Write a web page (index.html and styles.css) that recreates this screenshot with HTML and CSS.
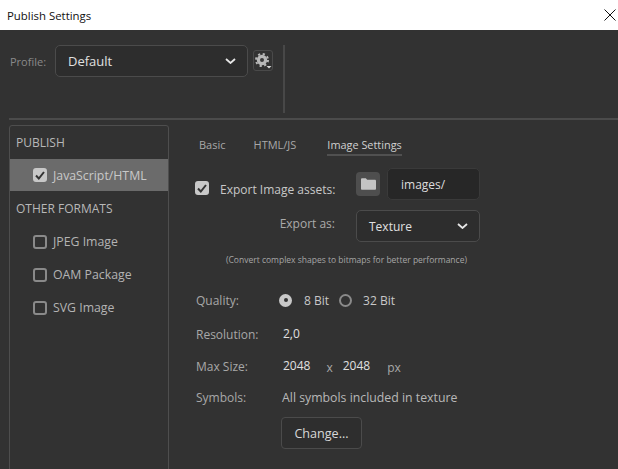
FILE: index.html
```html
<!DOCTYPE html>
<html lang="en">
<head>
<meta charset="utf-8">
<title>Publish Settings</title>
<link rel="stylesheet" href="styles.css">
</head>
<body>
<div class="window">
  <header class="titlebar">
    <span class="title">Publish Settings</span>
    <svg class="close" width="12" height="12" viewBox="0 0 12 12"><path d="M.5.5l11 11M11.500.5l-11 11" stroke="#111" stroke-width="1" fill="none"/></svg>
  </header>
  <section class="profile">
    <span class="profile-label">Profile:</span>
    <div class="select profile-select"><span>Default</span>
      <svg class="chev" width="11" height="6" viewBox="0 0 11 6"><path d="M1 1l4.500 4 4.500-4" stroke="#e6e6e6" stroke-width="1.800" fill="none"/></svg>
    </div>
    <div class="gear-btn">
      <svg width="18" height="18" viewBox="0 0 18 18"><circle cx="8" cy="8" r="5.200" fill="#b8b8b8"/><circle cx="8" cy="8" r="6" fill="none" stroke="#b8b8b8" stroke-width="2" stroke-dasharray="2.200 2.512"/><circle cx="8" cy="8" r="2" fill="#3a3a3a"/><path d="M12.500 14h5L15 16.500z" fill="#d8d8d8"/></svg>
    </div>
    <div class="vsep"></div>
  </section>
  <div class="hsep"></div>
  <main class="body">
    <aside class="sidebar">
      <div class="group">PUBLISH</div>
      <div class="item active"><span class="check on"><svg width="10" height="9" viewBox="0 0 10 9"><path d="M1 4.500l2.800 3L9 1" stroke="#333" stroke-width="2" fill="none"/></svg></span>JavaScript/HTML</div>
      <div class="group other">OTHER FORMATS</div>
      <div class="item"><span class="check"></span>JPEG Image</div>
      <div class="item"><span class="check"></span>OAM Package</div>
      <div class="item"><span class="check"></span>SVG Image</div>
    </aside>
    <div class="pane">
      <nav class="tabs">
        <span class="tab">Basic</span>
        <span class="tab">HTML/JS</span>
        <span class="tab current">Image Settings</span>
      </nav>
      <div class="export-row">
        <span class="check on export-check"><svg width="10" height="9" viewBox="0 0 10 9"><path d="M1 4.500l2.800 3L9 1" stroke="#333" stroke-width="2" fill="none"/></svg></span>
        <span class="export-label">Export Image assets:</span>
        <span class="folder"><svg width="15" height="12" viewBox="0 0 15 12"><path d="M0 1.500C0 .7.500.2 1.200.2h3.600l1.400 1.500h7.600c.7 0 1.200.5 1.200 1.200v7.900c0 .7-.5 1-1.200 1H1.200C.5 11.800 0 11.500 0 10.800z" fill="#c4c4c4"/></svg></span>
        <span class="input">images/</span>
      </div>
      <div class="export-as">
        <span class="export-as-label">Export as:</span>
        <div class="select texture-select"><span>Texture</span>
          <svg class="chev" width="11" height="6" viewBox="0 0 11 6"><path d="M1 1l4.500 4 4.500-4" stroke="#e6e6e6" stroke-width="1.800" fill="none"/></svg>
        </div>
      </div>
      <p class="hint">(Convert complex shapes to bitmaps for better performance)</p>
      <div class="grid">
        <span class="lbl">Quality:</span>
        <div class="val radios">
          <span class="radio on"></span><span class="radio-text">8 Bit</span>
          <span class="radio"></span><span class="radio-text">32 Bit</span>
        </div>
        <span class="lbl">Resolution:</span>
        <div class="val bright res">2,0</div>
        <span class="lbl">Max Size:</span>
        <div class="val size"><span class="bright num">2048</span><span class="x">x</span><span class="bright num">2048</span><span class="px">px</span></div>
        <span class="lbl">Symbols:</span>
        <div class="val wide">All symbols included in texture</div>
      </div>
      <button class="change" type="button">Change...</button>
    </div>
  </main>
</div>
</body>
</html>
```
FILE: styles.css
```css
* { box-sizing: border-box; }
html, body { margin: 0; height: 100%; }
body { background: #323232; overflow: hidden; font-family: "Open Sans", "Noto Sans", sans-serif; font-size: 12px; color: #c2c2c2; }
.window { width: 618px; height: 469px; overflow: hidden; display: flex; flex-direction: column; }
.titlebar { height: 30px; flex: none; background: #fff; color: #111; display: flex; align-items: center; justify-content: space-between; padding: 0 2px 0 7px; }
.title { font-size: 11.400px; }
.profile { height: 88px; flex: none; display: flex; align-items: flex-start; padding-left: 10px; }
.profile-label { color: #8a8a8a; font-size: 11px; margin-top: 24px; width: 45px; }
.select { display: flex; align-items: center; justify-content: space-between; border: 1px solid #4b4b4b; border-radius: 5px; background: #2d2d2d; color: #e0e0e0; }
.profile-select { width: 193px; height: 32px; margin-top: 15px; padding: 0 11px 0 12px; font-size: 13px; }
.gear-btn { width: 20px; height: 21px; margin: 20px 0 0 5px; border: 1px solid #4a4a4a; border-radius: 3px; display: flex; align-items: center; justify-content: center; }
.vsep { width: 2px; height: 68px; background: #484848; margin: 15px 0 0 10px; }
.hsep { height: 2px; flex: none; background: #4b4b4b; margin-left: 9px; }
.body { flex: 1; display: flex; padding: 5px 0 0 9px; min-height: 0; }
.sidebar { width: 160px; height: 400px; flex: none; border: 1px solid #4e4e4e; border-radius: 3px; }
.group { height: 33px; padding-left: 6px; display: flex; align-items: center; color: #b8b8b8; }
.group.other { height: 34px; }
.item { height: 33px; display: flex; align-items: center; padding-left: 23px; gap: 6px; color: #b4b4b4; font-size: 12.300px; }
.item.active { height: 32px; background: #6b6b6b; color: #c8c8c8; }
.check { width: 14px; height: 14px; flex: none; border: 2px solid #8a8a8a; border-radius: 3px; display: flex; align-items: center; justify-content: center; }
.check.on { background: #c8c8c8; border-color: #c8c8c8; }
.pane { flex: 1; padding-left: 26px; min-width: 0; }
.tabs { display: flex; height: 32px; align-items: flex-start; padding-left: 4px; gap: 28px; padding-top: 12px; font-size: 11px; color: #a8a8a8; }
.tab { height: 19px; }
.tab.current { color: #d0d0d0; border-bottom: 2px solid #505050; margin-left: 3px; font-size: 10.900px; }
.export-row { display: flex; align-items: center; height: 32px; margin-top: 11px; }
.export-check { margin-top: 8px; }
.export-label { margin-left: 11px; color: #c8c8c8; width: 136px; padding-top: 10px; }
.folder { width: 24px; height: 24px; background: #4e4e4e; border-radius: 4px; display: flex; align-items: center; justify-content: center; }
.input { width: 93px; height: 32px; margin-left: 7px; background: #272727; border: 1px solid #3a3a3a; border-radius: 5px; display: flex; align-items: center; padding-left: 13px; color: #dcdcdc; }
.export-as { display: flex; align-items: center; height: 32px; margin-top: 10px; }
.export-as-label { width: 161px; text-align: right; padding-right: 21px; color: #aaa; margin-bottom: 6px; }
.texture-select { width: 124px; height: 32px; padding: 0 11px 0 12px; }
.hint { margin: 12px 0 0 31px; font-size: 8.500px; line-height: 12px; color: #a6a6a6; white-space: nowrap; }
.grid { display: grid; grid-template-columns: 86px 1fr; grid-template-rows: 34px 34px 30px 32px; align-items: center; margin: 17px 0 0 1px; }
.lbl { color: #a8a8a8; }
.val { color: #b8b8b8; }
.wide { font-size: 12.300px; }
.bright { color: #e0e0e0; }
.res { margin: 0 0 2px 1px; }
.radios { display: flex; align-items: center; margin-left: -3px; }
.radio { width: 13px; height: 13px; border: 2px solid #8a8a8a; border-radius: 50%; flex: none; }
.radio.on { background: #c8c8c8; border-color: #c8c8c8; position: relative; }
.radio.on::after { content: ""; position: absolute; left: 2.500px; top: 2.500px; width: 4px; height: 4px; border-radius: 50%; background: #333; }
.radio-text { margin: 0 11px; color: #c8c8c8; }
.radio.on + .radio-text { margin: 0 10px 0 12px; }
.size { display: flex; align-items: center; margin-left: 1px; }
.num { margin-bottom: 2px; }
.x { margin: 2px 10px 0 16px; color: #a8a8a8; }
.px { margin: 2px 0 0 17px; color: #a8a8a8; }
.change { display: block; margin: 4px 0 0 86px; width: 81px; height: 32px; background: #2e2e2e; border: 1px solid #4b4b4b; border-radius: 4px; color: #d8d8d8; font: inherit; font-size: 12.600px; padding: 0; }
```
